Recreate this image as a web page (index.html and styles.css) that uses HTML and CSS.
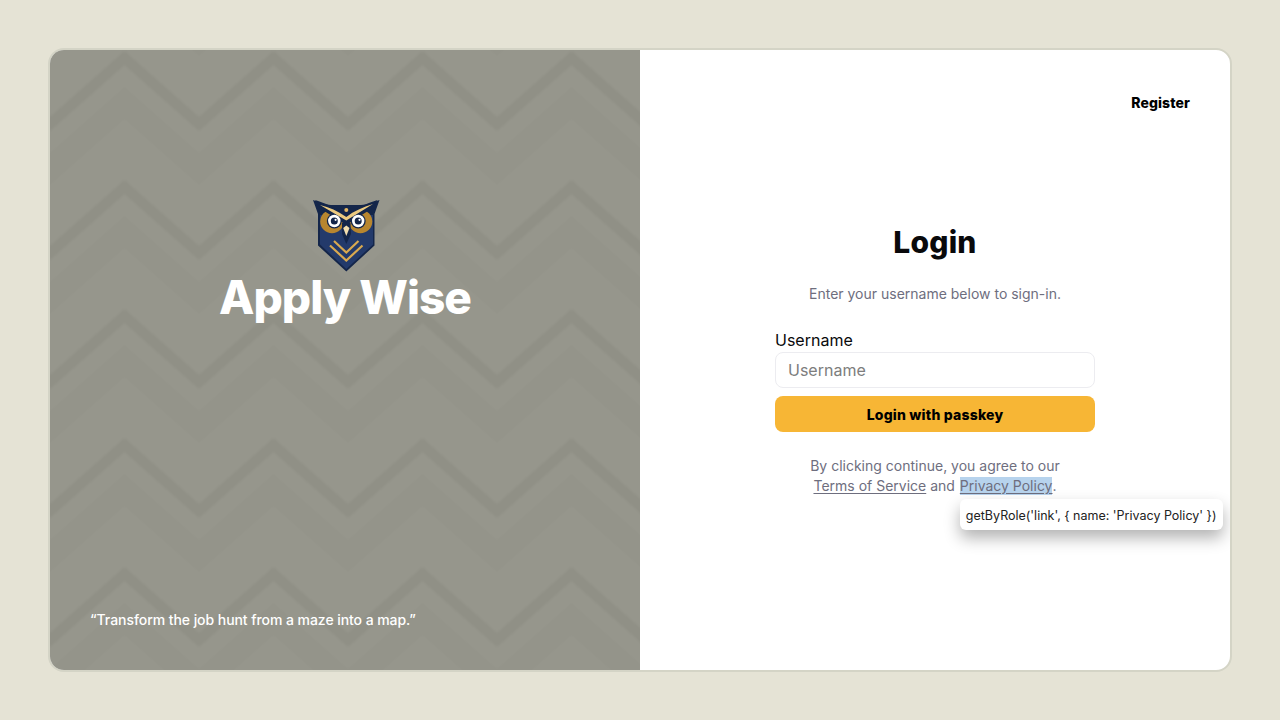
FILE: index.html
```html
<!DOCTYPE html>
<html lang="en">
<head>
<meta charset="utf-8">
<title>Apply Wise - Login</title>
<link rel="stylesheet" href="styles.css">
</head>
<body>
<main class="card">
  <section class="brand">
    <svg class="pattern" width="598" height="628" aria-hidden="true">
      <defs>
        <pattern id="chev" width="149" height="129" patternUnits="userSpaceOnUse" patternTransform="translate(4 4)">
          <rect width="149" height="129" fill="#96968c"/>
          <path d="M0 103 74.500 37 149 103V135L74.500 69 0 135Z" fill="#94948a"/>
          <path d="M0 -26 74.500 -92 149 -26V6L74.500 -60 0 6Z" fill="#94948a"/>
          <path d="M0 67 74.500 1 149 67V81L74.500 15 0 81Z" fill="#909086"/>
        </pattern>
      </defs>
      <rect width="598" height="628" fill="url(#chev)"/>
    </svg>
    <div class="brand-top">
      <svg class="owl" width="67" height="72" viewBox="0 0 67 72" aria-label="Apply Wise logo">
        <path d="M0 0C6 2 12 5 18 5H48C54 5 60 2 66.500 0L61.500 14V45.500L33.300 71.500 5 45.500V14Z" fill="#14264a"/>
        <path d="M7 15H60V44.500L33.300 69 7 44.500Z" fill="#233a6b"/>
        <circle cx="19" cy="21.500" r="11.800" fill="#b8862f"/>
        <circle cx="47.500" cy="21.500" r="11.800" fill="#b8862f"/>
        <circle cx="21.300" cy="21" r="7.500" fill="#14264a"/>
        <circle cx="45.200" cy="21" r="7.500" fill="#14264a"/>
        <path d="M2 0C12 3 24 8 33.300 15 43 8 54 3 64.500 0L58 9 33.300 25 8 9Z" fill="#14264a"/>
        <path d="M7 5C16 7 25 11 33.300 17 41 11 50 7 60 4L33.300 20.500Z" fill="#ecca80"/>
        <circle cx="33.300" cy="10" r="2" fill="#e3b765"/>
        <circle cx="21.300" cy="21" r="6.200" fill="#fff"/>
        <circle cx="45.200" cy="21" r="6.200" fill="#fff"/>
        <circle cx="21.300" cy="21" r="3.500" fill="#14264a"/>
        <circle cx="45.200" cy="21" r="3.500" fill="#14264a"/>
        <circle cx="22.600" cy="19.800" r="1.100" fill="#fff"/>
        <circle cx="46.500" cy="19.800" r="1.100" fill="#fff"/>
        <path d="M29 23 33.300 22 37.500 23 38 34 33.300 44 29 34Z" fill="#14264a"/>
        <path d="M30.200 28 33.300 25.500 36.500 28 33.300 36Z" fill="#f3dfb0"/>
        <path d="M21 41 33.300 52.500 45.500 41" fill="none" stroke="#d9a94f" stroke-width="2.200"/>
        <path d="M17 45.500 33.300 60.500 49.500 45.500" fill="none" stroke="#d9a94f" stroke-width="2.200"/>
      </svg>
      <h2 class="brand-name">Apply Wise</h2>
    </div>
    <p class="quote">“Transform the job hunt from a maze into a map.”</p>
  </section>
  <section class="auth">
    <nav class="auth-nav"><a class="register" href="#">Register</a></nav>
    <div class="form">
      <h1 class="title">Login</h1>
      <p class="sub">Enter your username below to sign-in.</p>
      <label class="label" for="username">Username</label>
      <input class="input" id="username" type="text" placeholder="Username">
      <button class="btn" type="button">Login with passkey</button>
      <p class="terms">By clicking continue, you agree to our<br>
        <a href="#">Terms of Service</a> and <span class="hl"><a href="#">Privacy Policy</a><span class="tip">getByRole('link', { name: 'Privacy Policy' })</span></span>.</p>
    </div>
  </section>
</main>
</body>
</html>
```

FILE: styles.css
```css
* { box-sizing: border-box; }
html, body { height: 100%; }
body {
  margin: 0;
  background: #e5e3d5;
  display: flex;
  align-items: center;
  justify-content: center;
  font-family: Inter, "Liberation Sans", sans-serif;
}
.card {
  width: 1184px;
  height: 624px;
  border: 2px solid #d4d4c6;
  border-radius: 16px;
  overflow: hidden;
  display: grid;
  grid-template-columns: 590px 590px;
  background: #fff;
}
.brand {
  position: relative;
  overflow: hidden;
  display: flex;
  flex-direction: column;
  justify-content: space-between;
  padding: 150px 40px 40px;
  color: #fff;
}
.pattern { position: absolute; left: -4px; top: -4px; filter: blur(1px); }
.brand-top {
  position: relative;
  display: flex;
  flex-direction: column;
  align-items: center;
}
.owl { display: block; margin-left: 2px; }
.brand-name {
  margin: 0;
  font-size: 46px;
  line-height: 50px;
  font-weight: 800;
  letter-spacing: -1px;
}
.quote {
  position: relative;
  margin: 0;
  font-size: 14px;
  line-height: 20px;
  font-weight: 500;
  letter-spacing: -0.06px;
}
.auth { padding: 42px 40px 0; display: flex; flex-direction: column; }
.auth-nav { display: flex; justify-content: flex-end; }
.register {
  font-size: 14px;
  line-height: 21px;
  font-weight: 800;
  letter-spacing: 0.1px;
  color: #000;
  text-decoration: none;
}
.form {
  width: 320px;
  margin: 111px auto 0;
  display: flex;
  flex-direction: column;
  text-align: center;
}
.title {
  margin: 0;
  font-size: 30px;
  line-height: 36px;
  font-weight: 800;
  letter-spacing: 0.2px;
  color: #09090b;
}
.sub {
  margin: 24px 0 0;
  font-size: 14px;
  line-height: 20px;
  color: #6e6e7e;
}
.label {
  margin-top: 24px;
  font-size: 16px;
  line-height: 24px;
  text-align: left;
  color: #09090b;
}
.input {
  height: 36px;
  border: 1px solid #ececf0;
  border-radius: 8px;
  padding: 0 12px;
  font: 400 16px Inter, sans-serif;
  background: #fff;
}
.input::placeholder { color: #7d7d7d; opacity: 1; }
.btn {
  margin-top: 8px;
  height: 36px;
  border: 0;
  border-radius: 8px;
  background: #f7b635;
  color: #000;
  font: 800 14px Inter, sans-serif;
  letter-spacing: 0.2px;
}
.terms {
  margin: 24px 0 0;
  font-size: 14px;
  line-height: 20px;
  color: #6e6e7e;
}
.terms a { color: #6e6e7e; text-decoration: underline; text-underline-offset: 2px; }
.hl { position: relative; display: inline-block; margin-left: 1px; background: rgba(111, 168, 220, 0.5); line-height: 18px; }
.tip {
  position: absolute;
  left: 0;
  top: 22px;
  width: 263px;
  height: 31px;
  padding: 1px 6px 0;
  background: #fff;
  border-radius: 6px;
  box-shadow: 0 8px 16px rgba(0, 0, 0, 0.3);
  font-size: 12.5px;
  line-height: 31px;
  color: #222;
  white-space: nowrap;
  text-align: left;
}
```
